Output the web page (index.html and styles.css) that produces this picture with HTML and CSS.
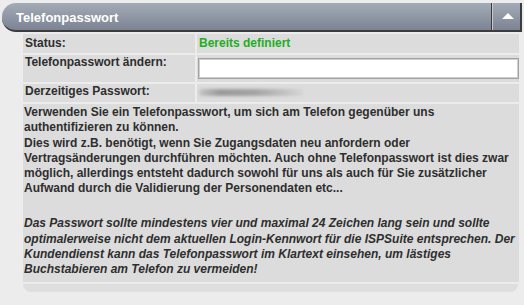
FILE: index.html
```html
<!DOCTYPE html>
<html lang="de">
<head>
<meta charset="utf-8">
<title>Telefonpasswort</title>
<link rel="stylesheet" href="styles.css">
</head>
<body>
<div class="page">
  <div class="header">
    <div class="title">Telefonpasswort</div>
    <div class="toggle"><span class="arrow"></span></div>
  </div>
  <div class="content">
    <div class="row row-status">
      <div class="cell label">Status:</div>
      <div class="cell value ok">Bereits definiert</div>
    </div>
    <div class="row row-change">
      <div class="cell label top">Telefonpasswort ändern:</div>
      <div class="cell value input-cell"><input class="pw-input" type="text"></div>
    </div>
    <div class="row row-current">
      <div class="cell label">Derzeitiges Passwort:</div>
      <div class="cell value"><span class="blurred"></span></div>
    </div>
    <div class="desc">
      <div class="para">Verwenden Sie ein Telefonpasswort, um sich am Telefon gegenüber uns<br>authentifizieren zu können.<br>Dies wird z.B. benötigt, wenn Sie Zugangsdaten neu anfordern oder<br>Vertragsänderungen durchführen möchten. Auch ohne Telefonpasswort ist dies zwar<br>möglich, allerdings entsteht dadurch sowohl für uns als auch für Sie zusätzlicher<br>Aufwand durch die Validierung der Personendaten etc...</div>
      <div class="para note">Das Passwort sollte mindestens vier und maximal 24 Zeichen lang sein und sollte<br>optimalerweise nicht dem aktuellen Login-Kennwort für die ISPSuite entsprechen. Der<br>Kundendienst kann das Telefonpasswort im Klartext einsehen, um lästiges<br>Buchstabieren am Telefon zu vermeiden!</div>
    </div>
    <div class="footer"></div>
  </div>
</div>
</body>
</html>
```
FILE: styles.css
```css
html, body {
  margin: 0;
  padding: 0;
  background: #ececec;
}
body {
  font-family: "Liberation Sans", Arial, sans-serif;
  font-size: 12px;
  font-weight: bold;
  color: #2e2e2e;
}
.page {
  padding: 3px 0 0 2px;
  width: 520px;
}
.header {
  display: flex;
  height: 27px;
  background: linear-gradient(#a3abb6, #7c8494);
  border-right: 2px solid #3c3c3c;
  border-bottom: 2px solid #3c3c3c;
  border-radius: 14px 0 0 14px;
}
.title {
  flex: 1;
  color: #ffffff;
  font-size: 13px;
  line-height: 24px;
  padding: 3px 0 0 14px;
  white-space: nowrap;
}
.toggle {
  width: 29px;
  border-left: 1px solid #3c3c3c;
  box-shadow: inset 1px 0 0 #c4c8d0;
  display: flex;
  align-items: center;
  justify-content: center;
  padding-left: 3px;
  box-sizing: border-box;
}
.arrow {
  width: 0;
  height: 0;
  border-left: 6px solid transparent;
  border-right: 6px solid transparent;
  border-bottom: 6px solid #ffffff;
  margin-top: -1px;
}
.content {
  margin: 2px 0 0 21px;
  width: 496px;
  display: flex;
  flex-direction: column;
  gap: 2px;
}
.row {
  display: grid;
  grid-template-columns: 172px 322px;
  gap: 2px;
}
.cell {
  background: #dcdcdc;
  line-height: 15px;
  padding: 0 2px;
  white-space: nowrap;
}
.row-status { height: 19px; }
.row-status .cell { padding-top: 2px; }
.row-change { height: 27px; }
.row-current { height: 18px; }
.ok { color: #1fae1f; }
.input-cell {
  padding: 3px 1px 0 1px;
}
.pw-input {
  box-sizing: border-box;
  width: 321px;
  height: 21px;
  margin: 0;
  border: 1px solid #a2a2a2;
  box-shadow: inset 0 0 0 1px #cfcfcf;
  background: #ffffff;
  outline: none;
  display: block;
}
.blurred {
  display: inline-block;
  width: 104px;
  height: 7px;
  margin-top: 5px;
  background: linear-gradient(90deg, #c4c4c4 0%, #9a9a9a 20%, #a4a4a4 55%, #d6d6d6 100%);
  filter: blur(1.5px);
  border-radius: 4px;
}
.desc {
  background: #dcdcdc;
  height: 178px;
  box-sizing: border-box;
  padding: 1px 1px 0 1px;
  line-height: 15.3px;
  white-space: nowrap;
}
.note {
  font-style: italic;
  margin-top: 19.7px;
}
.footer {
  position: relative;
  height: 8px;
  background: #dedede;
  border-radius: 0 0 10px 10px;
  margin-right: 1px;
}
.footer::after {
  content: "";
  position: absolute;
  left: 12px;
  right: 11px;
  top: 8px;
  height: 6px;
  background: #dcdcdc;
}
```
